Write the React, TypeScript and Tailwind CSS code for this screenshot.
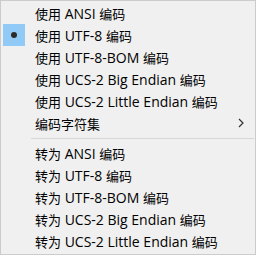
const useItems = [
  { label: "使用 ANSI 编码" },
  { label: "使用 UTF-8 编码", checked: true },
  { label: "使用 UTF-8-BOM 编码" },
  { label: "使用 UCS-2 Big Endian 编码" },
  { label: "使用 UCS-2 Little Endian 编码" },
  { label: "编码字符集", submenu: true },
]

const convertItems = [
  "转为 ANSI 编码",
  "转为 UTF-8 编码",
  "转为 UTF-8-BOM 编码",
  "转为 UCS-2 Big Endian 编码",
  "转为 UCS-2 Little Endian 编码",
]

// CJK glyphs and latin runs get separate sizes, like the Windows menu font
function Label({ text }: { text: string }) {
  const parts = text.split(/([\u4e00-\u9fff]+)/).filter(Boolean)
  return (
    <span className="flex-1 whitespace-nowrap leading-none text-black">
      {parts.map((p, i) =>
        /[\u4e00-\u9fff]/.test(p) ? (
          <span key={i} className="text-[13px]">
            {p}
          </span>
        ) : (
          <span key={i} className="text-[14px]">
            {p}
          </span>
        )
      )}
    </span>
  )
}

function MenuItem({ label, checked, submenu }: { label: string; checked?: boolean; submenu?: boolean }) {
  return (
    <div className="flex h-[22px] items-center gap-[10px]">
      <div className="ml-[2px] flex h-[22px] w-[22px] items-center justify-center">
        {checked && (
          <div className="flex h-[22px] w-[22px] items-center justify-center bg-[#91c9f7]">
            <span className="h-[6px] w-[6px] rounded-full bg-[#2b2b2b]" />
          </div>
        )}
      </div>
      <Label text={label} />
      {submenu && (
        <svg width="6" height="10" viewBox="0 0 6 10" className="mr-[11px]">
          <path d="M1 1 L5 5 L1 9" fill="none" stroke="#333" strokeWidth="1.2" />
        </svg>
      )}
    </div>
  )
}

export default function App() {
  return (
    <div
      className="h-[255px] w-[256px] border border-[#cccccc] bg-[#f0f0f0] pt-[1px]"
      style={{ fontFamily: '"Open Sans", "Noto Sans CJK SC", sans-serif' }}
    >
      {useItems.map((item) => (
        <MenuItem key={item.label} {...item} />
      ))}
      <div className="flex h-[8px] items-center">
        <div className="ml-[30px] mr-[1px] h-px flex-1 bg-[#d7d7d7]" />
      </div>
      {convertItems.map((label) => (
        <MenuItem key={label} label={label} />
      ))}
    </div>
  )
}
